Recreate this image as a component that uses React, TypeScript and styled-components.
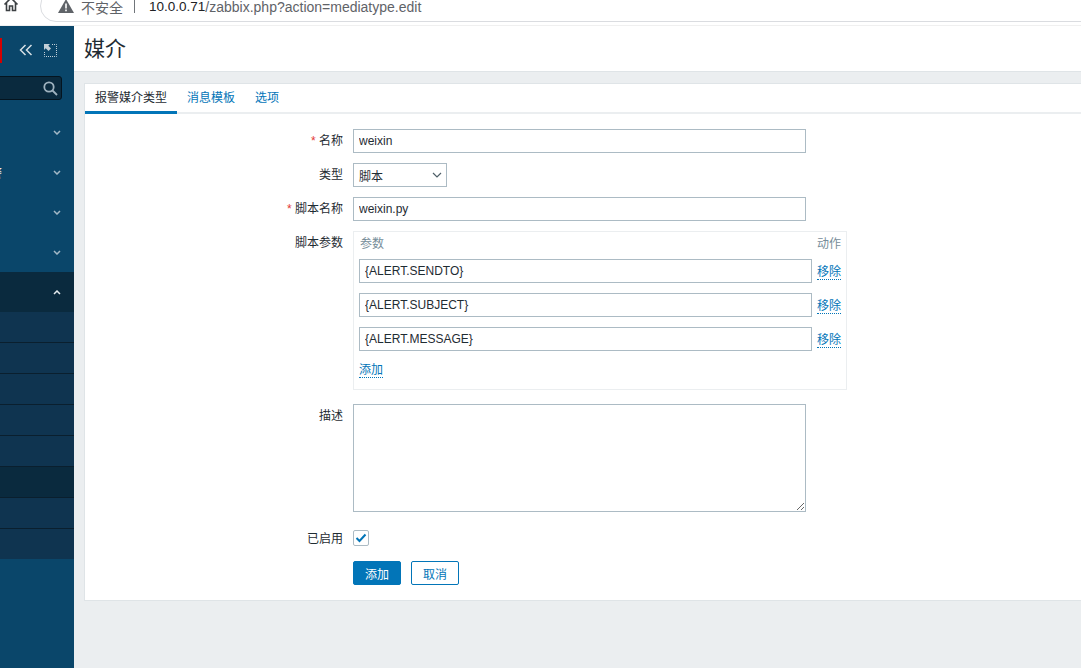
import React from "react";
import styled, { createGlobalStyle } from "styled-components";

const menuItems = [{ label: "" }, { label: "警" }, { label: "" }, { label: "" }];
const subItems = [false, false, false, false, false, true, false, false];
const params = ["{ALERT.SENDTO}", "{ALERT.SUBJECT}", "{ALERT.MESSAGE}"];

export default function App() {
  return (
    <Page>
      <GlobalStyle />
      <BrowserBar>
        <HomeIcon viewBox="0 0 16 16">
          <path d="M1.500 7.500 8 1l6.500 6.500M3.500 6v7.500h3V9h3v4.500h3V6" />
        </HomeIcon>
        <UrlPill>
          <WarnIcon viewBox="0 0 16 14">
            <path d="M8 0 16 14H0Z" fill="#5f6368" />
            <path d="M7.200 4.500h1.600v5H7.200ZM7.200 10.600h1.600v1.600H7.200Z" fill="#fff" />
          </WarnIcon>
          <Insecure>不安全</Insecure>
          <UrlDivider />
          <UrlHost>10.0.0.71</UrlHost>
          <UrlPath>/zabbix.php?action=mediatype.edit</UrlPath>
        </UrlPill>
      </BrowserBar>
      <Body>
        <Sidebar>
          <SideHead>
            <LogoMark />
            <CollapseIcon viewBox="0 0 14 12">
              <path d="M6.500 1 1.500 6l5 5M12.500 1l-5 5 5 5" />
            </CollapseIcon>
            <ExpandIcon viewBox="0 0 13 13">
              <path d="M0 0h6L4.300 1.700 7 4.500 4.500 7 1.700 4.300 0 6Z" fill="#c3d0d8" />
              <path d="M8 .5h4.500V12.500H.5V8" fill="none" stroke="#c3d0d8" strokeDasharray="1 1" />
            </ExpandIcon>
          </SideHead>
          <SearchBox>
            <SearchIcon viewBox="0 0 15 15">
              <circle cx="6" cy="6" r="4.700" />
              <path d="m9.500 9.500 4.500 4.500" />
            </SearchIcon>
          </SearchBox>
          <Menu>
            {menuItems.map((item, i) => (
              <MenuItem key={i}>
                <MenuLabel>{item.label}</MenuLabel>
                <Chevron viewBox="0 0 8 5">
                  <path d="M1 1l3 3 3-3" />
                </Chevron>
              </MenuItem>
            ))}
            <MenuItem $open>
              <MenuLabel />
              <Chevron viewBox="0 0 8 5" $open>
                <path d="M1 4l3-3 3 3" />
              </Chevron>
            </MenuItem>
            <SubMenu>
              {subItems.map((selected, i) => (
                <SubItem key={i} $selected={selected} />
              ))}
            </SubMenu>
          </Menu>
        </Sidebar>
        <Main>
          <Header>
            <Title>媒介</Title>
          </Header>
          <Card>
            <Tabs>
              <Tab $active>报警媒介类型</Tab>
              <Tab>消息模板</Tab>
              <Tab>选项</Tab>
            </Tabs>
            <Form>
              <Row>
                <Label $required>名称</Label>
                <TextInput defaultValue="weixin" />
              </Row>
              <Row $top={10}>
                <Label>类型</Label>
                <SelectBox>
                  脚本
                  <SelectArrow viewBox="0 0 10 6">
                    <path d="M1 1l4 4 4-4" />
                  </SelectArrow>
                </SelectBox>
              </Row>
              <Row $top={10}>
                <Label $required>脚本名称</Label>
                <TextInput defaultValue="weixin.py" />
              </Row>
              <Row $top={10}>
                <Label>脚本参数</Label>
                <ParamTable>
                  <ParamHead>
                    <span>参数</span>
                    <span>动作</span>
                  </ParamHead>
                  {params.map((p) => (
                    <ParamRow key={p}>
                      <ParamInput defaultValue={p} />
                      <RemoveLink>移除</RemoveLink>
                    </ParamRow>
                  ))}
                  <AddRow>
                    <DottedLink>添加</DottedLink>
                  </AddRow>
                </ParamTable>
              </Row>
              <Row $top={14}>
                <Label>描述</Label>
                <TextArea />
              </Row>
              <Row $top={18}>
                <Label $center>已启用</Label>
                <CheckBox>
                  <svg width="12" height="10" viewBox="0 0 12 10">
                    <path d="M1.500 5 4.500 8 10.500 1.500" fill="none" stroke="#0275b8" strokeWidth="2" />
                  </svg>
                </CheckBox>
              </Row>
              <Row $top={14}>
                <Label />
                <Buttons>
                  <PrimaryButton>添加</PrimaryButton>
                  <GhostButton>取消</GhostButton>
                </Buttons>
              </Row>
            </Form>
          </Card>
        </Main>
      </Body>
    </Page>
  );
}

const GlobalStyle = createGlobalStyle`
  html, body {
    margin: 0;
    padding: 0;
    background: #fff;
  }
  * {
    box-sizing: border-box;
  }
`;

const fontStack = `"Liberation Sans", "Noto Sans CJK SC", sans-serif`;

const Page = styled.div`
  width: 1081px;
  height: 668px;
  overflow: hidden;
  display: flex;
  flex-direction: column;
  font-family: ${fontStack};
  font-size: 12px;
  color: #1f2c33;
`;

const BrowserBar = styled.div`
  height: 26px;
  flex: none;
  display: flex;
  align-items: flex-start;
  background: #fff;
  border-bottom: 1px solid #f0f0f0;
  overflow: hidden;
`;

const HomeIcon = styled.svg`
  width: 16px;
  height: 16px;
  margin: -3px 0 0 3px;
  flex: none;
  fill: none;
  stroke: #3c4043;
  stroke-width: 1.600;
`;

const UrlPill = styled.div`
  margin: -10px 0 0 21px;
  width: 1100px;
  height: 32px;
  flex: none;
  display: flex;
  align-items: center;
  padding: 10px 0 0 17px;
  border: 1px solid #dadce0;
  border-radius: 16px;
  font-size: 14px;
  white-space: nowrap;
`;

const WarnIcon = styled.svg`
  width: 16px;
  height: 14px;
  margin-top: -11px;
`;

const Insecure = styled.span`
  margin: -9px 0 0 7px;
  color: #5f6368;
`;

const UrlDivider = styled.span`
  width: 1px;
  height: 14px;
  margin: -11px 14px 0 11px;
  background: #70757a;
`;

const UrlHost = styled.span`
  margin-top: -9px;
  font-size: 13.500px;
  color: #202124;
`;

const UrlPath = styled.span`
  margin-top: -9px;
  color: #5f6368;
`;

const Body = styled.div`
  flex: 1;
  min-height: 0;
  display: flex;
`;

const Sidebar = styled.nav`
  width: 74px;
  flex: none;
  background: #0a466a;
  overflow: hidden;
`;

const SideHead = styled.div`
  height: 50px;
  display: flex;
  align-items: center;
`;

const LogoMark = styled.div`
  width: 2px;
  height: 25px;
  margin: -1px 17px 0 0;
  background: #d40000;
`;

const CollapseIcon = styled.svg`
  width: 14px;
  height: 12px;
  margin-top: -2px;
  fill: none;
  stroke: #d7e0e5;
  stroke-width: 1.500;
`;

const ExpandIcon = styled.svg`
  width: 13px;
  height: 13px;
  margin: -2px 0 0 11px;
`;

const SearchBox = styled.div`
  width: 72px;
  height: 24px;
  margin-left: -10px;
  display: flex;
  align-items: center;
  justify-content: flex-end;
  padding-right: 3px;
  background: #0a2a3e;
  border: 1px solid #04141f;
  border-radius: 3px;
`;

const SearchIcon = styled.svg`
  width: 15px;
  height: 15px;
  fill: none;
  stroke: #9fb2bf;
  stroke-width: 1.800;
`;

const Menu = styled.div`
  margin-top: 12px;
`;

const MenuItem = styled.div<{ $open?: boolean }>`
  height: 40px;
  display: flex;
  align-items: center;
  justify-content: space-between;
  padding-right: 13px;
  background: ${(p) => (p.$open ? "#0a2a3e" : "transparent")};
`;

const MenuLabel = styled.span`
  margin-left: -10px;
  margin-top: 1px;
  font-size: 12px;
  color: #f2f2f2;
`;

const Chevron = styled.svg<{ $open?: boolean }>`
  width: 8px;
  height: 5px;
  fill: none;
  stroke: ${(p) => (p.$open ? "#e4eaee" : "#a3b8c6")};
  stroke-width: 1.500;
`;

const SubMenu = styled.div`
  background: #0f3450;
`;

const SubItem = styled.div<{ $selected?: boolean }>`
  height: 31px;
  background: ${(p) => (p.$selected ? "#0a2a3e" : "#0f3450")};
  border-bottom: 1px solid #0a1f2e;

  &:last-child {
    height: 30px;
    border-bottom: none;
  }
`;

const Main = styled.main`
  flex: 1;
  min-width: 0;
  background: #ebeef0;
  overflow: hidden;
`;

const Header = styled.header`
  height: 46px;
  display: flex;
  align-items: center;
  padding-left: 10px;
  background: #fff;
  border-bottom: 1px solid #dfe4e7;
`;

const Title = styled.h1`
  margin: 0 0 1px;
  font-size: 21px;
  font-weight: 400;
  line-height: 1;
`;

const Card = styled.section`
  margin: 11px -2px 0 10px;
  height: 518px;
  background: #fff;
  border: 1px solid #dfe4e7;
`;

const Tabs = styled.div`
  height: 30px;
  display: flex;
  border-bottom: 2px solid #ebeef0;
`;

const Tab = styled.div<{ $active?: boolean }>`
  height: 30px;
  flex: none;
  padding: 6px 10px 0;
  line-height: 16px;
  color: ${(p) => (p.$active ? "#1f2c33" : "#0275b8")};
  border-bottom: 3px solid ${(p) => (p.$active ? "#0275b8" : "transparent")};
`;

const Form = styled.div`
  padding-top: 15px;
`;

const Row = styled.div<{ $top?: number }>`
  display: flex;
  align-items: flex-start;
  gap: 10px;
  margin-top: ${(p) => p.$top ?? 0}px;
`;

const Label = styled.label<{ $required?: boolean; $center?: boolean }>`
  width: 258px;
  flex: none;
  text-align: right;
  line-height: 16px;
  padding-top: ${(p) => (p.$center ? "1px" : "4px")};

  &::before {
    content: ${(p) => (p.$required ? `"* "` : "none")};
    color: #e33734;
  }
`;

const fieldBorder = `1px solid #acbbc4`;

const TextInput = styled.input`
  width: 453px;
  height: 24px;
  padding: 0 5px;
  border: ${fieldBorder};
  border-radius: 0;
  outline: none;
  font: 12px ${fontStack};
  color: #1f2c33;
`;

const SelectBox = styled.div`
  width: 94px;
  height: 24px;
  display: flex;
  align-items: center;
  justify-content: space-between;
  padding: 0 4px 0 5px;
  border: ${fieldBorder};
`;

const SelectArrow = styled.svg`
  width: 10px;
  height: 6px;
  fill: none;
  stroke: #4f5f68;
  stroke-width: 1.200;
`;

const ParamTable = styled.div`
  width: 494px;
  height: 159px;
  padding: 5px;
  border: 1px solid #ebeef0;
`;

const ParamHead = styled.div`
  height: 22px;
  display: flex;
  justify-content: space-between;
  align-items: flex-start;
  padding-left: 1px;
  line-height: 14px;
  color: #768d99;

  span:last-child {
    width: 24px;
  }
`;

const ParamRow = styled.div`
  display: flex;
  align-items: center;
  gap: 5px;
  margin-bottom: 10px;
`;

const ParamInput = styled(TextInput)`
  flex: none;
`;

const DottedLink = styled.span`
  color: #0275b8;
  line-height: 14px;
  border-bottom: 1px dotted #0275b8;
`;

const RemoveLink = styled(DottedLink)`
  margin-top: 2px;
`;

const AddRow = styled.div`
  display: flex;
  padding: 2px 0 0;
`;

const TextArea = styled.textarea`
  width: 453px;
  height: 108px;
  padding: 4px 5px;
  border: ${fieldBorder};
  border-radius: 0;
  outline: none;
  display: block;
  font: 12px ${fontStack};
`;

const CheckBox = styled.div`
  width: 16px;
  height: 16px;
  display: flex;
  align-items: center;
  justify-content: center;
  border: ${fieldBorder};
  border-radius: 2px;
`;

const Buttons = styled.div`
  display: flex;
  gap: 10px;
`;

const PrimaryButton = styled.button`
  width: 48px;
  height: 24px;
  padding: 0;
  border: 1px solid #0275b8;
  border-radius: 2px;
  background: #0275b8;
  color: #fff;
  font: 12px ${fontStack};
`;

const GhostButton = styled(PrimaryButton)`
  background: #fff;
  color: #0275b8;
`;
